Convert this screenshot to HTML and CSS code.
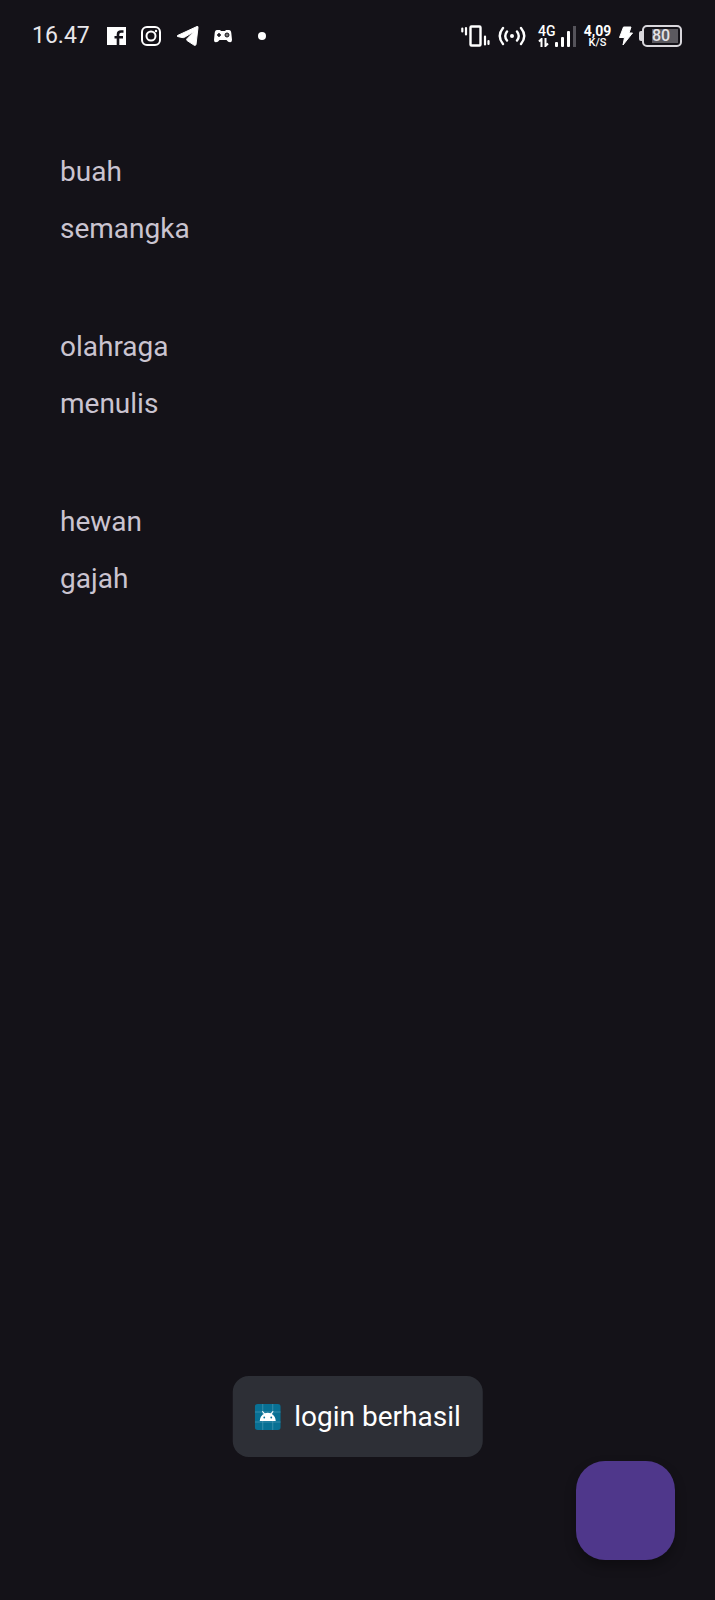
FILE: index.html
```html
<!DOCTYPE html>
<html lang="id">
<head>
<meta charset="utf-8">
<meta name="viewport" content="width=device-width, initial-scale=1">
<title>Daftar</title>
<link rel="stylesheet" href="styles.css">
</head>
<body>
<header class="status">
  <div class="status-left">
    <time class="clock">16.47</time>
    <svg class="facebook" width="19" height="20" viewBox="0 0 19 20"><path fill="#fff" d="M0 1h19v18H0z"/><path fill="none" stroke="#141218" stroke-width="2.600" d="M11 19V8.500q0-3 3-3h2.500M7.500 11.300h8.500"/></svg>
    <svg class="instagram" width="22" height="22" viewBox="0 0 22 22" fill="none" stroke="#fff" stroke-width="2"><rect x="2" y="2" width="18" height="18" rx="5"/><circle cx="11" cy="11" r="4.500"/><circle cx="16" cy="6" r="1.200" fill="#fff" stroke="none"/></svg>
    <svg class="telegram" width="24" height="22" viewBox="0 0 24 22"><path fill="#fff" stroke="#fff" stroke-linejoin="round" d="M1.500 10.500 21 1.500q1.200-.5 1 1L20 19.500q-.4 1.500-2 .6l-7-4.600q-.8-.8 0-1.800L18 6.500 8.500 12.300q-1 .6-2.500.200l-4.500-1q-.8-.5 0-1z"/></svg>
    <svg class="gamepad" width="18" height="14" viewBox="0 0 18 14"><path fill="#fff" d="M3 1h3l1 1h4l1-1h3q2 0 2.300 3l.7 7q-.2 2.500-2 2.300-2 0-3.500-2.300h-7Q4 13.300 2 13.300 0 13.500 0 11l.7-7Q1 1 3 1z"/><path stroke="#141218" stroke-width="1.500" d="M5 4v4M3 6h4"/><circle cx="13" cy="6" r="2" fill="#777" stroke="#141218"/></svg>
    <svg class="dot" width="8" height="8" viewBox="0 0 8 8"><circle cx="4" cy="4" r="4" fill="#fff"/></svg>
  </div>
  <div class="status-right">
    <svg width="29" height="22" viewBox="0 0 29 22" fill="none" stroke="#fff" stroke-width="2.200" stroke-linecap="round"><path d="M1.300 3.500v3M5 3v6.500M24 11.500v8M27.500 16v3"/><rect x="9.500" y="1.500" width="10" height="19" rx="1" stroke-width="2.400"/></svg>
    <svg class="hotspot" width="28" height="20" viewBox="0 0 28 20" fill="none" stroke="#fff" stroke-width="2.400" stroke-linecap="round"><circle cx="14" cy="10" r="2" fill="#fff" stroke="none"/><path d="M9 5.500q-3.500 4.500 0 9M19 5.500q3.500 4.500 0 9M5 2q-6.500 8 0 16M23 2q6.500 8 0 16"/></svg>
    <div class="network">
      <div class="network-type"><span>4G</span><svg width="12" height="9" viewBox="0 0 12 9" fill="none" stroke="#fff" stroke-width="2"><path d="M3.500 9V1L1 3.500M7.500 0v8L10 5.500"/></svg></div>
      <svg class="bars" width="21" height="21" viewBox="0 0 21 21" fill="#fff"><rect y="16" width="3" height="5" rx="1"/><rect x="6" y="11" width="3" height="10" rx="1"/><rect x="12" y="5" width="3" height="16" rx="1"/><rect x="18" width="3" height="21" fill="#55535a"/></svg>
    </div>
    <div class="speed"><span>4,09</span><span class="unit">K/S</span></div>
    <svg class="bolt" width="14" height="20" viewBox="0 0 14 20"><path fill="#fff" stroke="#fff" stroke-linejoin="round" d="M4.500 1H12L10 7h3.500L4 19l1.500-7.500H.5z"/></svg>
    <div class="battery"><span class="battery-level">80</span></div>
  </div>
</header>
<main class="list">
  <section class="entry"><p>buah</p><p>semangka</p></section>
  <section class="entry"><p>olahraga</p><p>menulis</p></section>
  <section class="entry"><p>hewan</p><p>gajah</p></section>
</main>
<div class="toast" role="status">
  <svg width="26" height="26" viewBox="0 0 26 26"><rect width="26" height="26" rx="3" fill="#087094"/><path d="M8 0v26M18 0v26M0 8h26M0 18h26" stroke="#55a0b8" stroke-width=".6"/><path fill="#fff" d="M5 17q.3-5 4-7L7.200 7.500l.8-.6 2 2.400q3-1 6 0l2-2.400.8.600L17 10q3.700 2 4 7z"/><circle cx="9.500" cy="13.500" r=".9" fill="#087094"/><circle cx="16.500" cy="13.500" r=".9" fill="#087094"/></svg>
  <span>login berhasil</span>
</div>
<button class="fab" type="button" aria-label="Tambah"></button>
</body>
</html>
```
FILE: styles.css
```css
* {
  box-sizing: border-box;
}

body {
  margin: 0;
  min-height: 100vh;
  background: #141218;
  color: #cac4d0;
  font-family: Roboto, "Liberation Sans", sans-serif;
}

svg {
  display: block;
  flex: none;
}

.status {
  display: flex;
  justify-content: space-between;
  align-items: center;
  height: 72px;
  padding: 0 33px 0 32px;
  color: #fff;
}

.status-left,
.status-right {
  display: flex;
  align-items: center;
}

.status-left {
  gap: 14px;
}

.status-right {
  gap: 8px;
}

.clock {
  width: 61px;
  font-size: 23px;
  line-height: 32px;
  color: #e8e6ea;
}

.dot {
  margin-left: 12px;
}

.network {
  display: flex;
  align-items: flex-end;
  margin-left: 4px;
}

.network-type {
  width: 17px;
  font-size: 14px;
  font-weight: 500;
  line-height: 13px;
}

.network-type span {
  display: block;
}

.speed {
  display: flex;
  flex-direction: column;
  align-items: center;
  width: 27px;
  font-size: 14px;
  font-weight: 700;
  line-height: 14px;
}

.unit {
  font-size: 11px;
  font-weight: 500;
  line-height: 10px;
}

.battery {
  position: relative;
  width: 40px;
  height: 22px;
  margin-left: 1px;
  padding: 2px;
  border: 2px solid #d9d7dc;
  border-radius: 5px;
}

.battery::before {
  content: "";
  position: absolute;
  left: -5px;
  top: 4px;
  width: 3px;
  height: 10px;
  border-radius: 2px 0 0 2px;
  background: #d9d7dc;
}

.battery-level {
  display: block;
  height: 14px;
  margin-left: 6px;
  padding-right: 8px;
  background: #5b595f;
  font-size: 16px;
  font-weight: 500;
  line-height: 14px;
  text-align: center;
  color: #e4e2e6;
}

.list {
  display: flex;
  flex-direction: column;
  gap: 61px;
  padding: 71px 60px 0;
}

.entry p {
  margin: 0;
  font-size: 28px;
  line-height: 57px;
}

.toast {
  position: fixed;
  left: 50%;
  bottom: 143px;
  transform: translateX(-50%);
  display: flex;
  align-items: center;
  gap: 14px;
  padding: 22px;
  border-radius: 16px;
  background: #2d2f36;
  color: #fff;
  font-size: 28px;
  line-height: 37px;
  white-space: nowrap;
}

.fab {
  position: fixed;
  right: 40px;
  bottom: 40px;
  width: 99px;
  height: 99px;
  border: 0;
  border-radius: 29px;
  background: #4f378b;
  box-shadow: 0 6px 12px rgba(0, 0, 0, 0.3);
}
```
